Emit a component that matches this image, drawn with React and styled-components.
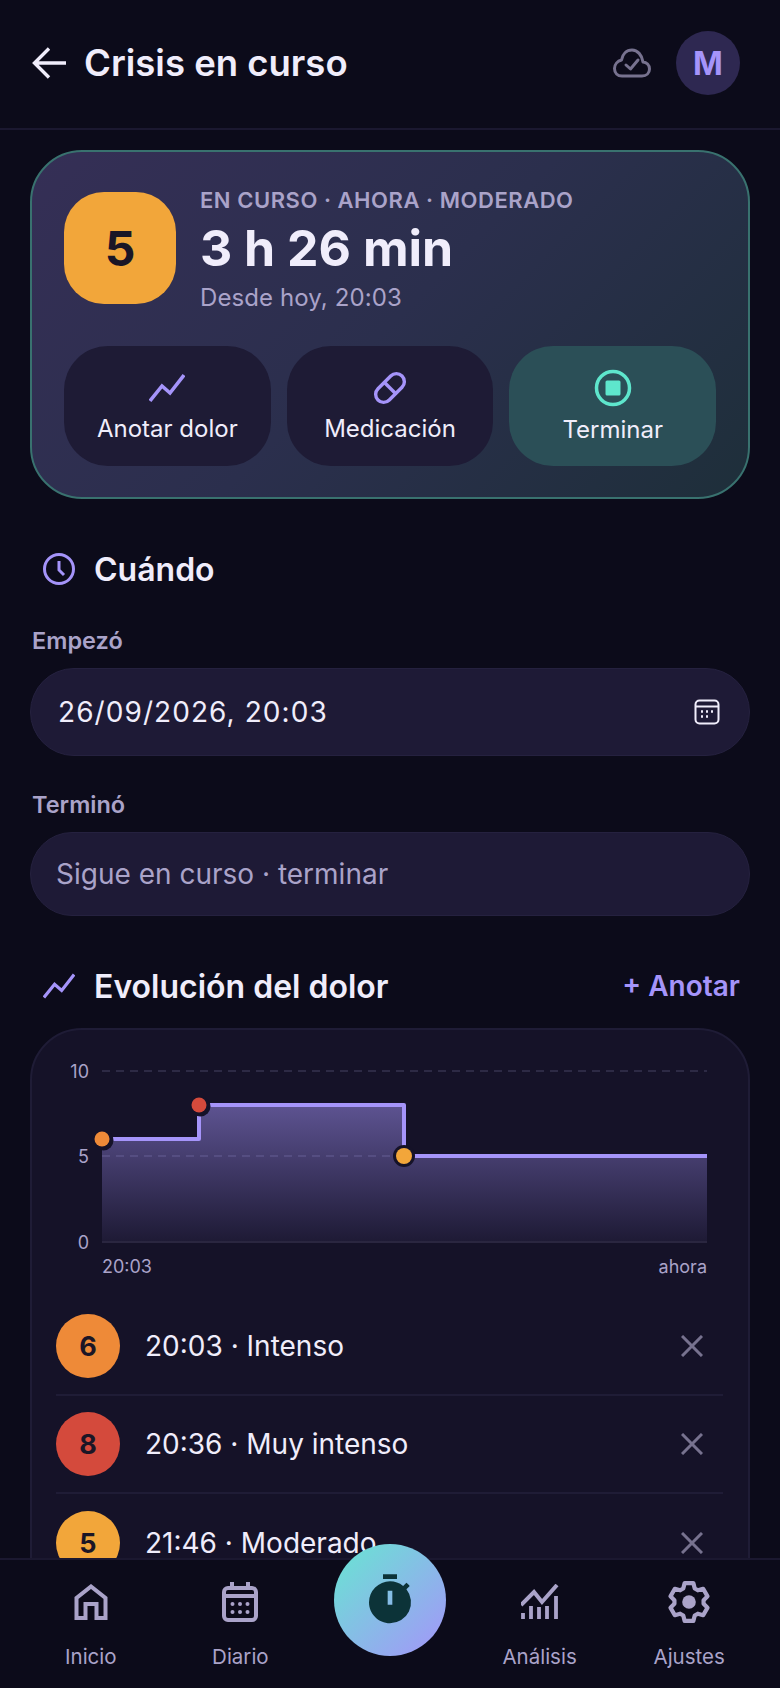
import React from 'react';
import styled, { createGlobalStyle } from 'styled-components';
import { MdTimer } from 'react-icons/md';

const Global = createGlobalStyle`
  html, body { margin: 0; padding: 0; background: #0c0b1a; }
  * { box-sizing: border-box; }
`;

const Screen = styled.div`
  width: 780px;
  height: 1688px;
  display: flex;
  flex-direction: column;
  overflow: hidden;
  background: #0c0b1a;
  color: #f0edfb;
  font-family: Inter, "Noto Sans", sans-serif;
`;

const TopBar = styled.header`
  flex: none;
  height: 130px;
  padding: 0 40px 2px 32px;
  display: flex;
  align-items: center;
  gap: 18px;
  border-bottom: 2px solid #1b1830;
`;
const BackButton = styled.div`
  display: flex;
  width: 34px;
  color: #f0edfb;
`;
const Title = styled.h1`
  flex: 1;
  margin: 0;
  font-size: 36.5px;
  font-weight: 600;
`;
const CloudIcon = styled.div`
  display: flex;
  margin-right: 7px;
  color: #77728f;
`;
const Avatar = styled.div`
  width: 64px;
  height: 64px;
  border-radius: 50%;
  background: #2e2851;
  color: #a594fa;
  display: flex;
  align-items: center;
  justify-content: center;
  font-size: 32px;
  font-weight: 700;
`;

const Content = styled.main`
  flex: 1;
  min-height: 0;
  overflow: hidden;
  padding: 20px 30px 0;
`;

const CrisisCard = styled.section`
  height: 349px;
  padding: 40px 32px 0;
  border: 2px solid #39726f;
  border-radius: 52px;
  background: linear-gradient(135deg, #352f56 0%, #2b2f4d 50%, #1e2f3a 100%);
`;
const CrisisTop = styled.div`
  height: 112px;
  display: flex;
  gap: 24px;
`;
const LevelTile = styled.div`
  width: 112px;
  height: 112px;
  border-radius: 40px;
  background: #f2a63a;
  color: #1b1626;
  display: flex;
  align-items: center;
  justify-content: center;
  font-size: 48px;
  font-weight: 700;
`;
const CrisisText = styled.div`
  margin-top: -6px;
`;
const Overline = styled.div`
  font-size: 22px;
  line-height: 28px;
  font-weight: 600;
  letter-spacing: 0.54px;
  color: #aaa3c9;
`;
const Elapsed = styled.div`
  margin-top: 4px;
  font-size: 50px;
  line-height: 60px;
  font-weight: 700;
  color: #f0edfb;
`;
const Since = styled.div`
  margin-top: 5px;
  font-size: 24px;
  line-height: 30px;
  letter-spacing: 0.1px;
  color: #aaa3c9;
`;
const Actions = styled.div`
  margin-top: 42px;
  display: grid;
  grid-template-columns: repeat(3, 1fr);
  gap: 16px;
`;
const ActionButton = styled.div`
  height: 120px;
  padding-top: 3px;
  border-radius: 44px;
  background: ${p => (p.$end ? '#2b4f57' : '#1e1b35')};
  color: ${p => (p.$end ? '#5ee6cc' : '#a594fa')};
  display: flex;
  flex-direction: column;
  align-items: center;
  justify-content: center;
  gap: 7px;
`;
const ActionLabel = styled.span`
  font-size: 24px;
  line-height: 32px;
  color: #f0edfb;
`;

const SectionHead = styled.div`
  display: flex;
  align-items: center;
  gap: 19px;
  padding: 0 10px 0 13px;
  height: 40px;
  margin-top: ${p => p.$top}px;
  color: #a594fa;
`;
const SectionTitle = styled.h2`
  flex: 1;
  margin: 0;
  font-size: 32px;
  font-weight: 600;
  color: #f0edfb;
`;
const AddLink = styled.span`
  font-size: 28px;
  font-weight: 600;
  color: #a594fa;
`;

const FieldLabel = styled.div`
  margin: ${p => p.$top}px 0 0 2px;
  font-size: 23.5px;
  line-height: 30px;
  font-weight: 600;
  color: #aaa3c9;
`;
const Field = styled.div`
  margin-top: 12px;
  height: ${p => p.$h}px;
  padding: 0 29px 0 ${p => p.$left}px;
  border: 1px solid #25213f;
  border-radius: 44px;
  background: #1e1a36;
  display: flex;
  align-items: center;
  justify-content: space-between;
`;
const FieldValue = styled.span`
  font-size: 28px;
  letter-spacing: 1.07px;
  color: #f0edfb;
`;
const FieldHint = styled.span`
  font-size: 28px;
  color: #aaa3c9;
`;

const ChartCard = styled.section`
  margin-top: 22px;
  height: 700px;
  padding: 0 25px 0 24px;
  border: 2px solid #1f1c36;
  border-radius: 52px;
  background: #151228;
`;
const ChartSvg = styled.svg`
  display: block;
  margin: 0 -25px 0 -24px;
  font-family: Inter, "Noto Sans", sans-serif;
`;
const PainRow = styled.div`
  height: 98px;
  display: flex;
  align-items: center;
  gap: 25px;
  border-bottom: ${p => (p.$last ? 'none' : '2px solid #1f1c36')};
`;
const PainDot = styled.div`
  width: 64px;
  height: 64px;
  border-radius: 50%;
  background: ${p => p.$color};
  color: #1b1626;
  display: flex;
  align-items: center;
  justify-content: center;
  font-size: 27px;
  font-weight: 700;
`;
const PainText = styled.span`
  flex: 1;
  font-size: 28px;
  color: #f0edfb;
`;
const RemoveIcon = styled.div`
  display: flex;
  margin-right: 20px;
  color: #77728f;
`;

const BottomNav = styled.nav`
  flex: none;
  position: relative;
  height: 130px;
  padding: 20px 16px 0;
  border-top: 2px solid #1b1830;
  background: #0c0b1a;
  display: grid;
  grid-template-columns: repeat(5, 149.6px);
`;
const NavItem = styled.div`
  display: flex;
  flex-direction: column;
  align-items: center;
  gap: 18px;
  color: #aaa3c9;
`;
const NavLabel = styled.span`
  font-size: 20.5px;
  line-height: 30px;
  color: #aaa3c9;
`;
const NavIconBox = styled.div`
  height: 44px;
  display: flex;
  align-items: center;
  justify-content: center;
`;
const Fab = styled.div`
  position: absolute;
  left: 334px;
  top: -16px;
  width: 112px;
  height: 112px;
  border-radius: 50%;
  background: linear-gradient(135deg, #67e6d2 0%, #a594fa 100%);
  color: #0c3338;
  display: flex;
  align-items: center;
  justify-content: center;
`;

const TrendIcon = ({ size = 36 }) => (
  <svg width={size} height={size} viewBox="0 0 36 36" fill="none" stroke="currentColor" strokeWidth="3.6">
    <path d="M1 31 L13 16 L21 23 L35 5" />
  </svg>
);

const PillIcon = () => (
  <svg width="36" height="36" viewBox="0 0 36 36" fill="none" stroke="currentColor" strokeWidth="3.4">
    <rect x="1" y="10" width="34" height="16" rx="8" transform="rotate(-45 18 18)" />
    <path d="M12.2 12.2 L23.8 23.8" />
  </svg>
);

const StopIcon = () => (
  <svg width="38" height="38" viewBox="0 0 38 38" fill="none">
    <circle cx="19" cy="19" r="16.5" stroke="currentColor" strokeWidth="3.5" />
    <rect x="11.5" y="11.5" width="15" height="15" rx="1.5" fill="currentColor" />
  </svg>
);

const ClockIcon = () => (
  <svg width="32" height="32" viewBox="0 0 32 32" fill="none" stroke="currentColor" strokeWidth="3">
    <circle cx="16" cy="16" r="14.5" />
    <path d="M16 8 V17 L21 22" />
  </svg>
);

const CloudCheck = () => (
  <svg width="38" height="30" viewBox="0 0 38 30" fill="none" stroke="currentColor" strokeWidth="3" strokeLinejoin="round" strokeLinecap="round">
    <path d="M9 28 H29 C33.5 28 36.5 25 36.5 21 C36.5 17 33.5 14.2 30 14 C29 7 24.5 2 19 2 C13.5 2 9.5 6 8.5 12 C4.5 13 1.5 16.5 1.5 20.5 C1.5 25 4.5 28 9 28 Z" />
    <path d="M13 17 L17.5 21 L25 12" />
  </svg>
);

const CalendarSmall = () => (
  <svg width="26" height="26" viewBox="0 0 26 26" fill="none" stroke="#f0edfb" strokeWidth="2">
    <rect x="1.5" y="1.5" width="23" height="23" rx="4" />
    <path d="M1.5 7.5 H24.5" />
    <path d="M7 12.5 h2 M12 12.5 h2 M17 12.5 h2 M7 17.5 h2 M12 17.5 h2" strokeWidth="2.4" />
  </svg>
);

const HomeIcon = () => (
  <svg width="34" height="36" viewBox="0 0 34 36" fill="none" stroke="currentColor" strokeWidth="4">
    <path d="M2.5 34 V14 L17 2.5 L31.5 14 V34 H22.5 V20 H11.5 V34 Z" />
  </svg>
);

const CalendarIcon = () => (
  <svg width="36" height="40" viewBox="0 0 36 40" fill="none" stroke="currentColor" strokeWidth="4">
    <rect x="2" y="6" width="32" height="32" rx="4" />
    <path d="M2 14 H34" />
    <path d="M10 0 V7 M26 0 V7" />
    <g fill="currentColor" stroke="none">
      <circle cx="10.5" cy="22" r="2" />
      <circle cx="18" cy="22" r="2" />
      <circle cx="25.5" cy="22" r="2" />
      <circle cx="10.5" cy="30" r="2" />
      <circle cx="18" cy="30" r="2" />
      <circle cx="25.5" cy="30" r="2" />
    </g>
  </svg>
);

const AnalyticsIcon = () => (
  <svg width="38" height="36" viewBox="0 0 38 36" fill="none" stroke="currentColor">
    <path d="M0 21 L13 8 L21 18 L36 1" strokeWidth="4" />
    <path d="M2 35 V29 M10 35 V22 M18 35 V23 M26 35 V22 M35 35 V12" strokeWidth="3.8" />
  </svg>
);

// six teeth, one pointing straight up
const gearPoints = [0, 1, 2, 3, 4, 5].flatMap(i => {
  const a = -90 + i * 60;
  return [
    [a - 23, 14],
    [a - 13, 18.5],
    [a + 13, 18.5],
    [a + 23, 14],
  ];
});
const gearPath =
  gearPoints
    .map(([deg, r], i) => {
      const rad = (deg * Math.PI) / 180;
      const x = (21 + r * Math.cos(rad)).toFixed(2);
      const y = (21 + r * Math.sin(rad)).toFixed(2);
      return `${i ? 'L' : 'M'}${x} ${y}`;
    })
    .join(' ') + ' Z';

const GearIcon = () => (
  <svg width="44" height="44" viewBox="0 0 42 42" fill="none" stroke="currentColor" strokeWidth="4" strokeLinejoin="round">
    <path d={gearPath} />
    <circle cx="21" cy="21" r="6.5" fill="currentColor" stroke="none" />
  </svg>
);

const entries = [
  { level: 6, color: '#ee8a38', text: '20:03 · Intenso' },
  { level: 8, color: '#d44a3c', text: '20:36 · Muy intenso' },
  { level: 5, color: '#f2a63a', text: '21:46 · Moderado', last: true },
];

const navItems = [
  { label: 'Inicio', icon: <HomeIcon /> },
  { label: 'Diario', icon: <CalendarIcon /> },
  null,
  { label: 'Análisis', icon: <AnalyticsIcon /> },
  { label: 'Ajustes', icon: <GearIcon /> },
];

// chart coordinates are relative to the card: x0 = 70, x1 = 675, top of scale = 41, baseline = 212
const PainChart = () => (
  <ChartSvg width="716" height="268" viewBox="0 0 716 268">
    <defs>
      <linearGradient id="painFill" x1="0" y1="0" x2="0" y2="1">
        <stop offset="0" stopColor="#a594fa" stopOpacity="0.5" />
        <stop offset="1" stopColor="#a594fa" stopOpacity="0.06" />
      </linearGradient>
    </defs>
    <path d="M70 41 H675 M70 126 H675" stroke="#2d2a45" strokeWidth="2" strokeDasharray="8 6" />
    <path d="M70 109 H167 V75 H372 V126 H675 V212 H70 Z" fill="url(#painFill)" />
    <path d="M70 212 H675" stroke="#2a2640" strokeWidth="2" />
    <path d="M70 109 H167 V75 H372 V126 H675" fill="none" stroke="#a594fa" strokeWidth="4" strokeLinejoin="round" />
    <circle cx="71.5" cy="110.5" r="10" fill="#151228" />
    <circle cx="70" cy="109" r="7.5" fill="#ee8a38" />
    <circle cx="168.5" cy="76.5" r="10" fill="#151228" />
    <circle cx="167" cy="75" r="7.5" fill="#d44a3c" />
    <circle cx="372" cy="126" r="11" fill="#151228" />
    <circle cx="372" cy="126" r="8" fill="#f2a63a" />
    <g fontSize="18" fill="#aaa3c9">
      <text x="57" y="48" textAnchor="end">10</text>
      <text x="57" y="133" textAnchor="end">5</text>
      <text x="57" y="219" textAnchor="end">0</text>
      <text x="70" y="243">20:03</text>
      <text x="675" y="243" textAnchor="end">ahora</text>
    </g>
  </ChartSvg>
);

const App = () => (
  <Screen>
    <Global />
    <TopBar>
      <BackButton>
        <svg width="34" height="32" viewBox="0 0 34 32" fill="none" stroke="currentColor" strokeWidth="3.4">
          <path d="M34 16 H3 M17 1.5 L2.5 16 L17 30.5" />
        </svg>
      </BackButton>
      <Title>Crisis en curso</Title>
      <CloudIcon><CloudCheck /></CloudIcon>
      <Avatar>M</Avatar>
    </TopBar>

    <Content>
      <CrisisCard>
        <CrisisTop>
          <LevelTile>5</LevelTile>
          <CrisisText>
            <Overline>EN CURSO · AHORA · MODERADO</Overline>
            <Elapsed>3 h 26 min</Elapsed>
            <Since>Desde hoy, 20:03</Since>
          </CrisisText>
        </CrisisTop>
        <Actions>
          <ActionButton>
            <TrendIcon />
            <ActionLabel>Anotar dolor</ActionLabel>
          </ActionButton>
          <ActionButton>
            <PillIcon />
            <ActionLabel>Medicación</ActionLabel>
          </ActionButton>
          <ActionButton $end>
            <StopIcon />
            <ActionLabel>Terminar</ActionLabel>
          </ActionButton>
        </Actions>
      </CrisisCard>

      <SectionHead $top={50}>
        <ClockIcon />
        <SectionTitle>Cuándo</SectionTitle>
      </SectionHead>

      <FieldLabel $top={37}>Empezó</FieldLabel>
      <Field $h={88} $left={27}>
        <FieldValue>26/09/2026, 20:03</FieldValue>
        <CalendarSmall />
      </Field>

      <FieldLabel $top={34}>Terminó</FieldLabel>
      <Field $h={84} $left={25}>
        <FieldHint>Sigue en curso · terminar</FieldHint>
      </Field>

      <SectionHead $top={50}>
        <TrendIcon size={32} />
        <SectionTitle>Evolución del dolor</SectionTitle>
        <AddLink>+ Anotar</AddLink>
      </SectionHead>

      <ChartCard>
        <PainChart />
        {entries.map(e => (
          <PainRow key={e.level} $last={e.last}>
            <PainDot $color={e.color}>{e.level}</PainDot>
            <PainText>{e.text}</PainText>
            <RemoveIcon>
              <svg width="22" height="22" viewBox="0 0 22 22" stroke="currentColor" strokeWidth="3">
                <path d="M1 1 L21 21 M21 1 L1 21" />
              </svg>
            </RemoveIcon>
          </PainRow>
        ))}
      </ChartCard>
    </Content>

    <BottomNav>
      {navItems.map((item, i) =>
        item ? (
          <NavItem key={item.label}>
            <NavIconBox>{item.icon}</NavIconBox>
            <NavLabel>{item.label}</NavLabel>
          </NavItem>
        ) : (
          <div key={i} />
        )
      )}
      <Fab><MdTimer size={56} /></Fab>
    </BottomNav>
  </Screen>
);

export default App;
